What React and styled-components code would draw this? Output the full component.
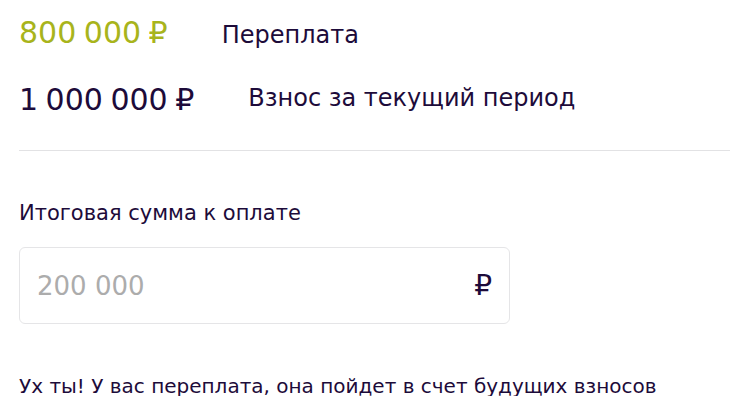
import styled, { createGlobalStyle } from "styled-components";

const GlobalStyle = createGlobalStyle`
    body {
        margin: 0;
        background: #ffffff;
        font-family: "DejaVu Sans", "Noto Sans", sans-serif;
        color: #1d0b3a;
    }
`;

const Page = styled.div`
    width: 730px;
    padding-left: 19px;
    box-sizing: border-box;
`;

const SummaryRow = styled.div`
    display: flex;
    align-items: baseline;
    gap: 54px;
    height: ${(p) => p.$height}px;
    padding-top: 18px;
    box-sizing: border-box;
`;

const Amount = styled.span`
    font-size: 30px;
    line-height: 30px;
    word-spacing: -2px;
    color: ${(p) => (p.$accent ? "#a8b41c" : "#1d0b3a")};
`;

const Caption = styled.span`
    font-size: 24px;
    line-height: 30px;
    color: #1d0b3a;
    position: relative;
    top: ${(p) => p.$shift || 0}px;
`;

const Divider = styled.hr`
    margin: 0;
    border: none;
    border-top: 1px solid #e2e2e4;
`;

const TotalBlock = styled.div`
    padding-top: 52px;
    display: flex;
    flex-direction: column;
    gap: 23px;
`;

const FieldLabel = styled.div`
    font-size: 21px;
    line-height: 21px;
    color: #1d0b3a;
`;

const Field = styled.label`
    width: 491px;
    height: 77px;
    box-sizing: border-box;
    border: 1px solid #e5e5e7;
    border-radius: 6px;
    display: flex;
    align-items: center;
    justify-content: space-between;
    padding: 0 17px 0 17px;
`;

const FieldInput = styled.input`
    border: none;
    outline: none;
    background: transparent;
    font-family: inherit;
    font-size: 26px;
    color: #1d0b3a;
    width: 300px;
    padding: 0;

    &::placeholder {
        color: #acacac;
    }
`;

const Currency = styled.span`
    font-size: 28px;
    font-weight: 500;
    color: #1d0b3a;
`;

const Notice = styled.p`
    margin: 52px 0 0;
    font-size: 20px;
    line-height: 20px;
    color: #1d0b3a;
`;

const App = () => {
    return (
        <Page>
            <GlobalStyle />
            <SummaryRow $height={67}>
                <Amount $accent>800 000 ₽</Amount>
                <Caption>Переплата</Caption>
            </SummaryRow>
            <SummaryRow $height={83}>
                <Amount>1 000 000 ₽</Amount>
                <Caption $shift={-4}>Взнос за текущий период</Caption>
            </SummaryRow>
            <Divider />
            <TotalBlock>
                <FieldLabel>Итоговая сумма к оплате</FieldLabel>
                <Field>
                    <FieldInput placeholder="200 000" />
                    <Currency>₽</Currency>
                </Field>
            </TotalBlock>
            <Notice>Ух ты! У вас переплата, она пойдет в счет будущих взносов</Notice>
        </Page>
    );
};

export default App;
